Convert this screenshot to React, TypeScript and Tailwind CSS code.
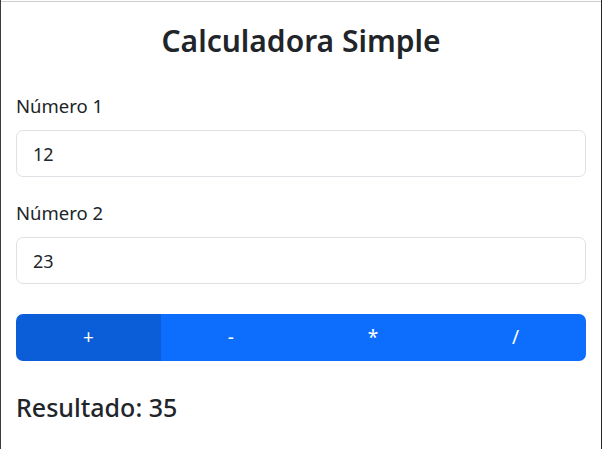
import { useState } from "react";

const OPS = ["+", "-", "*", "/"];

export default function App() {
  const [a, setA] = useState("12");
  const [b, setB] = useState("23");
  const [op, setOp] = useState("+");

  const x = parseFloat(a) || 0;
  const y = parseFloat(b) || 0;
  const result =
    op === "+" ? x + y : op === "-" ? x - y : op === "*" ? x * y : y !== 0 ? x / y : "Error";

  return (
    <div
      className="h-[449px] w-[602px] overflow-hidden border-x border-l-[#3c3c3c] border-r-[#262626] bg-white text-[#212529]"
      style={{ fontFamily: '"Noto Sans", "Open Sans", sans-serif' }}
    >
      <div className="h-[2px] border-b border-[#cdcdcd]" />
      <div className="px-[15px]">
        <h1 className="mt-[21px] text-center text-[30px] font-semibold leading-[36px]">
          Calculadora Simple
        </h1>

        <div className="mt-[32px]">
          <label className="block text-[18.5px] leading-[30px]">Número 1</label>
          <input
            value={a}
            onChange={(e) => setA(e.target.value)}
            className="mt-[9px] block h-[47px] w-full rounded-[7px] border border-[#dee2e6] px-[16px] text-[18px] outline-none"
          />
        </div>

        <div className="mt-[21px]">
          <label className="block text-[18.5px] leading-[30px]">Número 2</label>
          <input
            value={b}
            onChange={(e) => setB(e.target.value)}
            className="mt-[9px] block h-[47px] w-full rounded-[7px] border border-[#dee2e6] px-[16px] text-[18px] outline-none"
          />
        </div>

        <div className="mt-[30px] flex h-[47px] overflow-hidden rounded-[7px]">
          {OPS.map((o) => (
            <button
              key={o}
              onClick={() => setOp(o)}
              className={`flex-auto px-4 text-[19px] text-white ${o === op ? "bg-[#0b5ed7]" : "bg-[#0d6efd]"}`}
            >
              {o}
            </button>
          ))}
        </div>

        <h4 className="mt-[30px] text-[25px] font-medium leading-[32px]">Resultado: {result}</h4>
      </div>
    </div>
  );
}
